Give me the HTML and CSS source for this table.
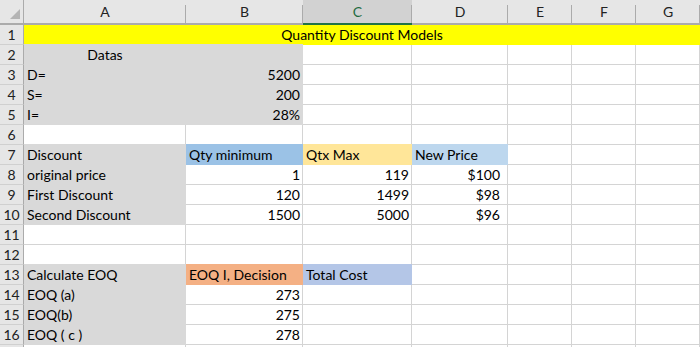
FILE: index.html
```html
<!DOCTYPE html>
<html>
<head>
<meta charset="utf-8">
<link rel="stylesheet" href="styles.css">
</head>
<body>
<div class="sheet">
  <div class="corner"><svg width="23" height="23" viewBox="0 0 23 23"><polygon points="20,9 20,19 10,19" fill="#b4b4b4"/></svg></div>
  <div class="ch">A</div><div class="ch">B</div><div class="ch sel">C</div><div class="ch">D</div><div class="ch">E</div><div class="ch">F</div><div class="ch">G</div>

  <div class="rh">1</div><div class="c ctr yellow span7">Quantity Discount Models</div>

  <div class="rh">2</div><div class="c ctr gray">Datas</div><div class="c gray"></div><div class="c"></div><div class="c"></div><div class="c"></div><div class="c"></div><div class="c"></div>
  <div class="rh">3</div><div class="c gray">D=</div><div class="c r gray">5200</div><div class="c"></div><div class="c"></div><div class="c"></div><div class="c"></div><div class="c"></div>
  <div class="rh">4</div><div class="c gray">S=</div><div class="c r gray">200</div><div class="c"></div><div class="c"></div><div class="c"></div><div class="c"></div><div class="c"></div>
  <div class="rh">5</div><div class="c gray">I=</div><div class="c r gray">28%</div><div class="c"></div><div class="c"></div><div class="c"></div><div class="c"></div><div class="c"></div>
  <div class="rh">6</div><div class="c"></div><div class="c"></div><div class="c"></div><div class="c"></div><div class="c"></div><div class="c"></div><div class="c"></div>
  <div class="rh">7</div><div class="c gray">Discount</div><div class="c blue">Qty minimum</div><div class="c gold">Qtx Max</div><div class="c lblue">New Price</div><div class="c"></div><div class="c"></div><div class="c"></div>
  <div class="rh">8</div><div class="c gray">original price</div><div class="c r">1</div><div class="c r">119</div><div class="c r cur">$100</div><div class="c"></div><div class="c"></div><div class="c"></div>
  <div class="rh">9</div><div class="c gray">First Discount</div><div class="c r">120</div><div class="c r">1499</div><div class="c r cur">$98</div><div class="c"></div><div class="c"></div><div class="c"></div>
  <div class="rh">10</div><div class="c gray">Second Discount</div><div class="c r">1500</div><div class="c r">5000</div><div class="c r cur">$96</div><div class="c"></div><div class="c"></div><div class="c"></div>
  <div class="rh">11</div><div class="c"></div><div class="c"></div><div class="c"></div><div class="c"></div><div class="c"></div><div class="c"></div><div class="c"></div>
  <div class="rh">12</div><div class="c"></div><div class="c"></div><div class="c"></div><div class="c"></div><div class="c"></div><div class="c"></div><div class="c"></div>
  <div class="rh">13</div><div class="c gray">Calculate EOQ</div><div class="c orange">EOQ I, Decision</div><div class="c blue2">Total Cost</div><div class="c"></div><div class="c"></div><div class="c"></div><div class="c"></div>
  <div class="rh">14</div><div class="c gray">EOQ (a)</div><div class="c r">273</div><div class="c"></div><div class="c"></div><div class="c"></div><div class="c"></div><div class="c"></div>
  <div class="rh">15</div><div class="c gray">EOQ(b)</div><div class="c r">275</div><div class="c"></div><div class="c"></div><div class="c"></div><div class="c"></div><div class="c"></div>
  <div class="rh">16</div><div class="c gray">EOQ ( c )</div><div class="c r">278</div><div class="c"></div><div class="c"></div><div class="c"></div><div class="c"></div><div class="c"></div>
  <div class="rh last"></div><div class="c last"></div><div class="c last"></div><div class="c last"></div><div class="c last"></div><div class="c last"></div><div class="c last"></div><div class="c last"></div>
</div>
</body>
</html>
```

FILE: styles.css
```css
html, body {
  margin: 0;
  padding: 0;
  background: #ffffff;
  overflow: hidden;
}
body {
  width: 700px;
  height: 347px;
  font-family: Lato, "Open Sans", sans-serif;
  font-size: 14px;
  color: #000000;
}
.sheet {
  display: grid;
  grid-template-columns: 24px 162px 117px 109px 96px 64px 64px 64px;
  grid-template-rows: 25px repeat(16, 20px) 2px;
}
.corner {
  background: #e6e6e6;
  border-bottom: 2px solid #ababab;
  border-right: 1px solid #ababab;
  box-sizing: border-box;
  display: flex;
}
.ch {
  background: #e6e6e6 linear-gradient(#ababab, #ababab) right 5px / 1px calc(100% - 5px) no-repeat;
  border-bottom: 2px solid #ababab;
  box-sizing: border-box;
  text-align: center;
  line-height: 23px;
  color: #222222;
}
.ch.sel {
  background: #d2d2d2 linear-gradient(#ababab, #ababab) right 5px / 1px calc(100% - 5px) no-repeat;
  border-bottom-color: #217346;
  color: #1e6b41;
}
.rh {
  background: #e6e6e6;
  border-right: 1px solid #ababab;
  border-bottom: 1px solid #d0d0d0;
  box-sizing: border-box;
  text-align: center;
  line-height: 19px;
  color: #222222;
}
.c {
  border-right: 1px solid #d4d4d4;
  border-bottom: 1px solid #d4d4d4;
  box-sizing: border-box;
  padding: 1px 2px 0 3px;
  line-height: 18px;
  white-space: nowrap;
  overflow: visible;
}
.last {
  border-bottom: 0;
  padding: 0;
}
.r { text-align: right; }
.cur { padding-right: 7px; }
.ctr { text-align: center; }
.span7 { grid-column: span 7; }
.yellow { background: #ffff00; border-color: #ffff00; }
.gray { background: #d9d9d9; border-color: #d9d9d9; box-shadow: 0 -1px 0 #d9d9d9; }
.blue { background: #9bc2e6; border-color: #9bc2e6; box-shadow: 0 -1px 0 #9bc2e6; }
.gold { background: #ffe699; border-color: #ffe699; box-shadow: 0 -1px 0 #ffe699; }
.lblue { background: #bdd7ee; border-color: #bdd7ee; box-shadow: 0 -1px 0 #bdd7ee; }
.orange { background: #f4b084; border-color: #f4b084; box-shadow: 0 -1px 0 #f4b084; }
.blue2 { background: #b4c6e7; border-color: #b4c6e7; box-shadow: 0 -1px 0 #b4c6e7; }
```
